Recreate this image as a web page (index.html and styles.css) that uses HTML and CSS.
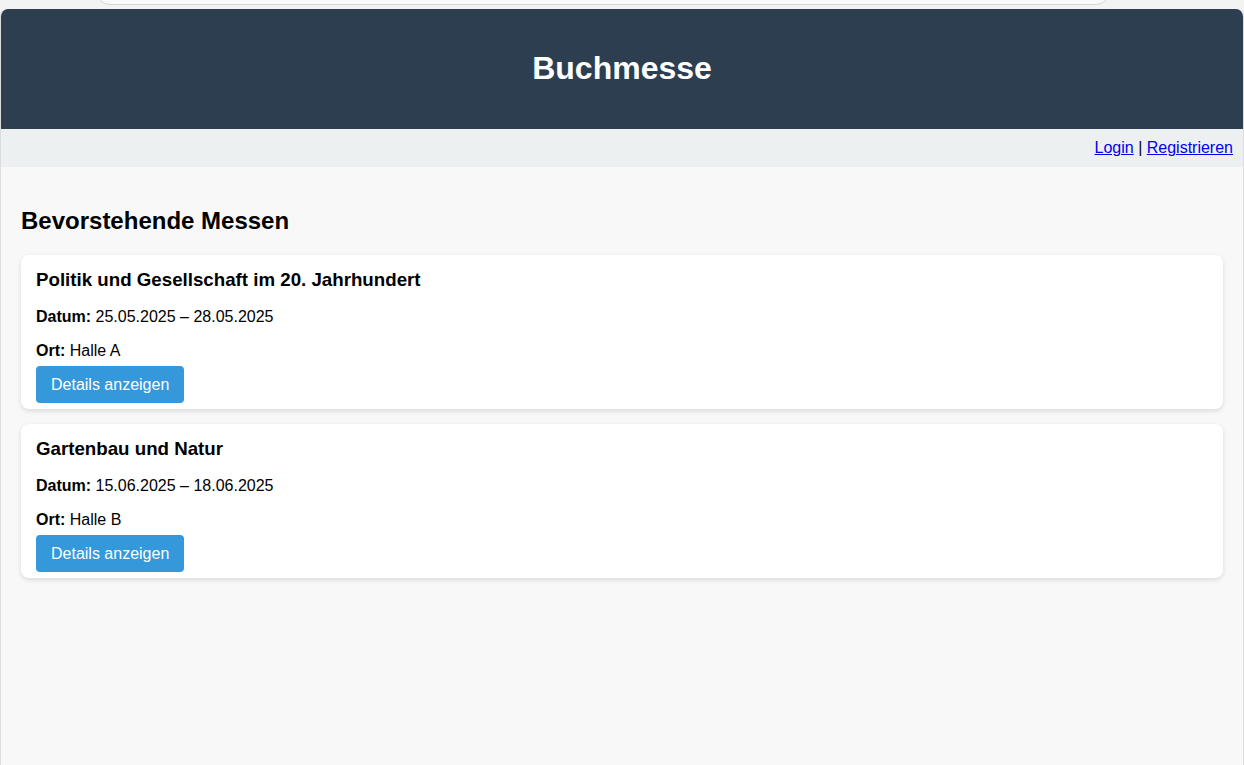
FILE: index.html
```html
<!DOCTYPE html>
<html lang="de">
<head>
<meta charset="utf-8">
<title>Buchmesse</title>
<link rel="stylesheet" href="styles.css">
</head>
<body>
<div class="chrome">
  <div class="searchbar"></div>
</div>
<div class="frame">
  <header class="site-header">
    <h1>Buchmesse</h1>
  </header>
  <nav class="site-nav">
    <a href="#">Login</a> | <a href="#">Registrieren</a>
  </nav>
  <main class="content">
    <h2>Bevorstehende Messen</h2>
    <div class="card">
      <h3>Politik und Gesellschaft im 20. Jahrhundert</h3>
      <p><strong>Datum:</strong> 25.05.2025 – 28.05.2025</p>
      <p class="last"><strong>Ort:</strong> Halle A</p>
      <a class="btn" href="#">Details anzeigen</a>
    </div>
    <div class="card">
      <h3>Gartenbau und Natur</h3>
      <p><strong>Datum:</strong> 15.06.2025 – 18.06.2025</p>
      <p class="last"><strong>Ort:</strong> Halle B</p>
      <a class="btn" href="#">Details anzeigen</a>
    </div>
  </main>
</div>
</body>
</html>
```
FILE: styles.css
```css
html, body {
  margin: 0;
  padding: 0;
  height: 100%;
  overflow: hidden;
}
body {
  background: #f3f3f3;
  font-family: "Liberation Sans", Arial, sans-serif;
  color: #000;
}
.chrome {
  display: flow-root;
  height: 9px;
  padding: 0 134px 0 96px;
}
.searchbar {
  margin-top: -20px;
  height: 23px;
  background: #fafafa;
  border: 1px solid #d6d6d6;
  border-radius: 0 0 14px 14px;
}
.frame {
  height: 756px;
  margin: 0;
  border-left: 1px solid #dcdcdc;
  border-right: 1px solid #dcdcdc;
  border-radius: 8px 8px 0 0;
  background: #f8f8f8;
  overflow: hidden;
}
.site-header {
  height: 120px;
  box-sizing: border-box;
  padding-bottom: 2px;
  background: #2c3e50;
  color: #fff;
  display: flex;
  align-items: center;
  justify-content: center;
}
.site-header h1 {
  margin: 0;
  font-size: 32px;
  font-weight: bold;
  line-height: 37px;
}
.site-nav {
  height: 38px;
  box-sizing: border-box;
  background: #ecf0f1;
  text-align: right;
  padding: 10px 10px 0 0;
  font-size: 16px;
  line-height: 18px;
}
.site-nav a {
  color: #0000ee;
}
.content {
  padding: 20px;
}
.content h2 {
  margin: 20px 0 20px;
  font-size: 24px;
  line-height: 28px;
}
.card {
  background: #fff;
  border-radius: 8px;
  box-shadow: 0 2px 5px rgba(0, 0, 0, 0.12);
  padding: 14px 15px 6px;
  margin-bottom: 15px;
  font-size: 16px;
}
.card h3 {
  margin: 0 0 17px;
  font-size: 18.72px;
  line-height: 22px;
}
.card p {
  margin: 0 0 16px;
  line-height: 18px;
}
.card p.last {
  margin-bottom: 6px;
}
.btn {
  display: inline-block;
  background: #3498db;
  color: #fff;
  text-decoration: none;
  padding: 10px 15px 9px;
  line-height: 18px;
  border-radius: 4px;
  font-size: 16px;
}
```
